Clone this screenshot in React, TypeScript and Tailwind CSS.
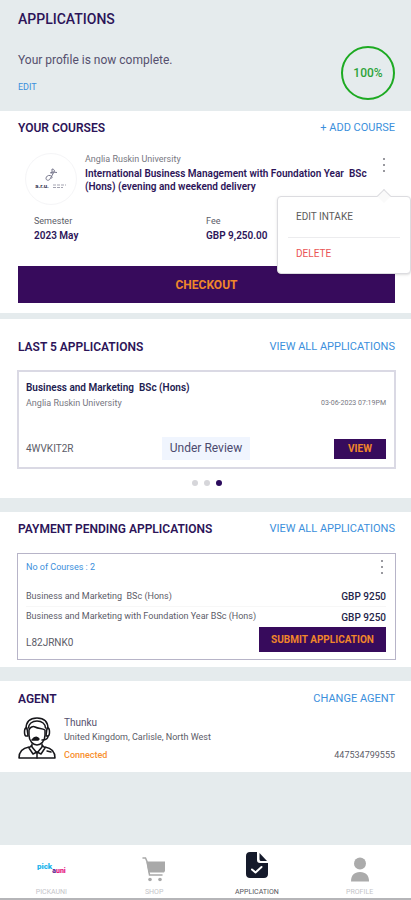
import React from 'react';
import { clsx } from 'clsx';

interface SectionHeaderProps {
  title: string;
  action: string;
}

const SectionHeader: React.FC<SectionHeaderProps> = ({ title, action }) => (
  <div className="flex h-4 items-center justify-between px-px">
    <h2 className="text-[12px] leading-4 font-semibold text-[#2c1458]">{title}</h2>
    <a href="#" className="text-[11px] leading-4 text-[#3b8fdc]">{action}</a>
  </div>
);

const MoreDots: React.FC<{ label: string }> = ({ label }) => (
  <button type="button" aria-label={label} className="flex h-4 w-2 flex-col items-center justify-between py-px">
    {[0, 1, 2].map((i) => (
      <span key={i} className="size-[2px] rounded-full bg-[#77777f]" />
    ))}
  </button>
);

const UniversityLogo = () => (
  <div className="flex size-[52px] shrink-0 flex-col items-center justify-center rounded-full border border-[#f5f5f7]">
    <svg viewBox="0 0 14 14" className="size-3.5" fill="none" stroke="#77778c" strokeWidth="1">
      <path d="M8 1c2 0 3 1.500 2 3L6 11c-1 2-4 1.500-4-.5S4 7 6 7.500s3 2 1 3M6 5l3-1 4 .5M8 1v5" />
    </svg>
    <div className="flex items-center gap-1 text-[#33334f]">
      <span className="text-[6px] leading-2 font-bold">a.r.u.</span>
      <svg viewBox="0 0 14 5" className="h-[5px] w-3.5" stroke="#a3a3b0" strokeWidth="1">
        <path d="M0 1h13M0 3.500h10" strokeDasharray="3 1" />
      </svg>
    </div>
  </div>
);

const AgentIcon = () => (
  <svg viewBox="0 0 38 42" className="h-[42px] w-[38px] shrink-0" fill="none" stroke="#16161a" strokeWidth="1.500" strokeLinejoin="round" strokeLinecap="round">
    <path d="M8 12C8 5 12 1 19 1s11 4 11 11" />
    <path d="M10.500 11c0-4 3.500-7 8.500-7s8.500 3 8.500 7" />
    <path d="M11 13c1-3 4-4 6-3 4 2 7 1 10 3v5c0 6-4 10-8 10s-8-4-8-10z" />
    <path d="M9 11H8c-2 0-2 8 0 8h2zM29 11h1c2 0 2 8 0 8h-2z" />
    <path d="M30 19c0 3-3 4-6 4" />
    <path d="M14 23l2-2c2-1 4-1 5 1l-1 1z" fill="#16161a" />
    <path d="M14 27v3l5 6 5-6v-3M14 28l-3 3 4 6 4-2 4 2 4-6-3-3M19 36v5" />
    <path d="M11 30c-6 1-10 4-10 11h36c0-7-4-10-10-11M29 34l4 1" />
  </svg>
);

const PickAUniLogo = () => (
  <div className="flex items-start leading-2 font-black">
    <span className="text-[8px] text-[#23b4ec]">pick</span>
    <span className="pt-1 text-[7px] text-[#e5187f]">
      <span className="text-[#5b2290]">a</span>uni
    </span>
  </div>
);

const CartIcon = () => (
  <svg viewBox="0 0 24 25" className="h-[25px] w-6">
    <path d="M1 1h2.500l1.500 3.500L7.500 18H20" fill="none" stroke="#a9a9a9" strokeWidth="1.500" strokeLinecap="round" />
    <path d="M4.500 4.500H23V14l-1 1.500H6.500z" fill="#a9a9a9" />
    <circle cx="8" cy="22.500" r="1.800" fill="#a9a9a9" />
    <circle cx="18" cy="22.500" r="1.800" fill="#a9a9a9" />
  </svg>
);

const ApplicationIcon = () => (
  <svg viewBox="0 0 22 26" className="h-[26px] w-[22px]">
    <path d="M4 0h7v8c0 2 1 3 3 3h8v11c0 2.500-1.500 4-4 4H4c-2.500 0-4-1.500-4-4V4c0-2.500 1.500-4 4-4z" fill="#151a2b" />
    <path d="M13.500 1l7.500 8h-5.500c-1.500 0-2-.5-2-2z" fill="#151a2b" />
    <path d="M6 17.500l3.500 3 6-5.500" fill="none" stroke="#fff" strokeWidth="2" strokeLinecap="round" strokeLinejoin="round" />
  </svg>
);

const ProfileIcon = () => (
  <svg viewBox="0 0 18 25" className="h-[25px] w-[18px]" fill="#ababab">
    <circle cx="9" cy="6.500" r="6" />
    <path d="M0 24.500c0-6 3-9.500 9-9.500s9 3.500 9 9.500z" />
  </svg>
);

const courses = [
  { name: 'Business and Marketing  BSc (Hons)', price: 'GBP 9250' },
  { name: 'Business and Marketing with Foundation Year BSc (Hons)', price: 'GBP 9250' },
];

const tabs = [
  { label: 'PICKAUNI', icon: <PickAUniLogo />, active: false },
  { label: 'SHOP', icon: <CartIcon />, active: false },
  { label: 'APPLICATION', icon: <ApplicationIcon />, active: true },
  { label: 'PROFILE', icon: <ProfileIcon />, active: false },
];

export default function App() {
  return (
    <div className="flex min-h-screen flex-col bg-[#e5ebed] font-[Roboto,sans-serif] text-[#5c5c68]">
      <header className="pt-[11px] pr-4 pb-[11px] pl-4.5">
        <h1 className="text-[14px] leading-4 font-medium text-[#2c1458]">APPLICATIONS</h1>
        <div className="mt-[19px] flex justify-between">
          <div className="pt-1.5">
            <p className="text-[12px] leading-4 text-[#55506e]">Your profile is now complete.</p>
            <a href="#" className="mt-[13px] block text-[9px] leading-3 text-[#3b8fdc]">EDIT</a>
          </div>
          <div className="flex size-[54px] items-center justify-center rounded-full border-2 border-[#1daa22] text-[12px] font-medium text-[#2da33a]">
            100%
          </div>
        </div>
      </header>

      <main className="flex flex-col">
        {/* Your courses */}
        <section className="relative bg-white pt-[9px] pr-[15px] pb-2.5 pl-[17px]">
          <SectionHeader title="YOUR COURSES" action="+ ADD COURSE" />
          <div className="mt-[17px] flex pl-2">
            <UniversityLogo />
            <div className="ml-2 min-w-0 flex-1">
              <p className="text-[9px] leading-3 text-[#77777f]">Anglia Ruskin University</p>
              <h3 className="mt-0.5 text-[10px] leading-[13px] font-semibold whitespace-pre-wrap text-[#2c1458]">
                {'International Business Management with Foundation Year  BSc (Hons) (evening and weekend delivery'}
              </h3>
            </div>
            <div className="-ml-2 pt-1 pr-2">
              <MoreDots label="Course options" />
            </div>
          </div>
          <dl className="mt-2.5 grid grid-cols-[172px_1fr] pl-[17px]">
            <div>
              <dt className="text-[9px] leading-3">Semester</dt>
              <dd className="mt-px text-[10px] leading-4 font-semibold text-[#2c1458]">2023 May</dd>
            </div>
            <div>
              <dt className="text-[9px] leading-3">Fee</dt>
              <dd className="mt-px text-[10px] leading-4 font-semibold text-[#2c1458]">GBP 9,250.00</dd>
            </div>
          </dl>
          <div className="mt-[22px] px-px">
            <button type="button" className="h-[37px] w-full bg-[#370b5c] text-[12px] font-bold text-[#f0862a]">
              CHECKOUT
            </button>
          </div>

          {/* Options menu, opened from the dots above */}
          <div role="menu" className="absolute top-[85px] right-0 w-[134px] rounded border border-[#dcdce0] bg-white px-2.5 pt-3 pb-[11px] shadow-sm">
            <span className="absolute -top-[6px] right-[21px] size-2.5 rotate-45 border-t border-l border-[#dcdce0] bg-[#fafafa]" />
            <button type="button" role="menuitem" className="block h-4 px-2 text-[10px] leading-4 text-[#5c5c5c]">EDIT INTAKE</button>
            <hr className="mt-3 mb-2 border-[#ececee]" />
            <button type="button" role="menuitem" className="block h-4 px-2 text-[10px] leading-4 text-[#ea5455]">DELETE</button>
          </div>
        </section>

        {/* Last applications */}
        <section className="mt-1.5 bg-white pt-5 pr-[15px] pb-[11px] pl-[17px]">
          <SectionHeader title="LAST 5 APPLICATIONS" action="VIEW ALL APPLICATIONS" />
          <article className="mt-[15px] border-2 border-[#dad9e4] pt-2 pr-2 pb-[7px] pl-[7px]">
            <h3 className="text-[10px] leading-4 font-semibold whitespace-pre-wrap text-[#1d2050]">{'Business and Marketing  BSc (Hons)'}</h3>
            <div className="mt-px flex justify-between">
              <p className="text-[9px] leading-3 text-[#77777f]">Anglia Ruskin University</p>
              <time className="text-[7px] leading-3 text-[#77777f]">03-06-2023 07:19PM</time>
            </div>
            <div className="mt-7 flex items-center justify-between">
              <span className="w-[84px] text-[10px] leading-4">4WVKIT2R</span>
              <span className="bg-[#f0f5fe] px-2 text-[12px] leading-[23px] text-[#4b4a6e]">Under Review</span>
              <div className="flex w-[84px] justify-end">
                <button type="button" className="h-5 w-[52px] bg-[#370b5c] text-[10px] font-bold text-[#f0862a]">VIEW</button>
              </div>
            </div>
          </article>
          <div className="mt-2.5 flex h-2 items-center justify-center gap-1.5">
            <span className="size-1.5 rounded-full bg-[#d6d6da]" />
            <span className="size-1.5 rounded-full bg-[#d6d6da]" />
            <span className="size-1.5 rounded-full bg-[#2a0a5c]" />
          </div>
        </section>

        {/* Payment pending */}
        <section className="mt-3.5 bg-white pt-[9px] pr-[15px] pb-[7px] pl-[17px]">
          <SectionHeader title="PAYMENT PENDING APPLICATIONS" action="VIEW ALL APPLICATIONS" />
          <article className="mt-4 border border-[#b7b4c8] pt-[5px] pr-[9px] pb-[7px] pl-2">
            <div className="flex h-4 items-center justify-between">
              <span className="text-[9px] leading-4 text-[#3b8fdc]">No of Courses : 2</span>
              <MoreDots label="Application options" />
            </div>
            <ul className="mt-3 divide-y divide-[#f7f7f7]">
              {courses.map((course) => (
                <li key={course.name} className="flex h-5 items-center justify-between">
                  <span className="text-[9px] whitespace-pre">{course.name}</span>
                  <span className="text-[10px] font-medium text-[#25254a]">{course.price}</span>
                </li>
              ))}
            </ul>
            <div className="flex justify-between">
              <span className="pt-2 text-[10px] leading-4">L82JRNK0</span>
              <button type="button" className="h-[25px] w-[127px] bg-[#370b5c] text-[10px] font-bold text-[#f0862a]">
                SUBMIT APPLICATION
              </button>
            </div>
          </article>
        </section>

        {/* Agent */}
        <section className="mt-3.5 bg-white pt-2.5 pr-[15px] pb-[11px] pl-[17px]">
          <SectionHeader title="AGENT" action="CHANGE AGENT" />
          <div className="mt-2.5 flex gap-2 px-px">
            <AgentIcon />
            <div className="flex-1">
              <p className="text-[10px] leading-3 text-[#55506e]">Thunku</p>
              <p className="mt-0.5 text-[9px] leading-3">United Kingdom, Carlisle, North West</p>
              <div className="mt-1.5 flex justify-between text-[9px] leading-3">
                <span className="font-medium text-[#f7902f]">Connected</span>
                <span>447534799555</span>
              </div>
            </div>
          </div>
        </section>
      </main>

      <nav className="mt-auto grid grid-cols-4 border-b-2 border-[#b5b5b8] bg-white pt-1.5">
        {tabs.map((tab) => (
          <a key={tab.label} href="#" className="flex flex-col items-center">
            <span className={clsx('flex h-7 items-center', tab.active ? 'mb-1' : 'mt-1')}>{tab.icon}</span>
            <span className={clsx('mt-1 text-[7px] leading-[11px]', tab.active ? 'text-[#55555c]' : 'text-[#c4c4c8]')}>
              {tab.label}
            </span>
          </a>
        ))}
      </nav>
    </div>
  );
}
